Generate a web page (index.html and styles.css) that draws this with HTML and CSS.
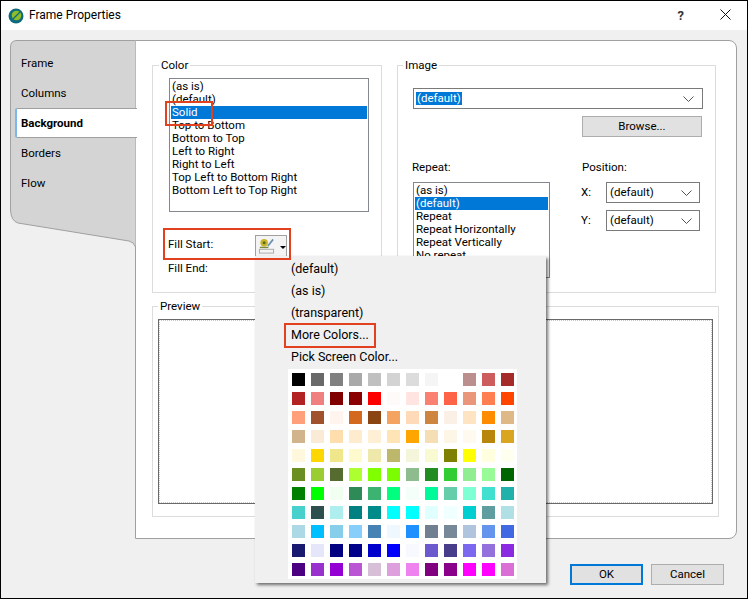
FILE: index.html
```html
<!DOCTYPE html>
<html lang="en">

<head>
    <meta charset="UTF-8">
    <title>Frame Properties</title>
    <link rel="stylesheet" href="styles.css">
</head>

<body>
    <div class="dialog">
        <div class="titlebar">
            <svg class="logo" width="16" height="16" viewBox="0 0 16 16">
                <circle cx="8" cy="8" r="7.5" fill="#0e6b7c" />
                <circle cx="8.5" cy="7.5" r="4.8" fill="#8fbc2b" />
                <path d="M5 11 L12 4" stroke="#0e6b7c" stroke-width="1.2" />
            </svg>
            <span class="title">Frame Properties</span>
            <span class="help">?</span>
            <svg class="close" width="11" height="11" viewBox="0 0 11 11">
                <path d="M0.5 0.5 L10.5 10.5 M10.5 0.5 L0.5 10.5" stroke="#111" stroke-width="1" fill="none" />
            </svg>
        </div>

        <div class="main">
            <div class="tabs">
                <svg class="tabs-bg" width="126" height="208" viewBox="0 0 126 208">
                    <path d="M0.5 207 L0.5 7 Q0.5 0.5 7 0.5 L125.5 0.5 L125.5 207 Q124 202 119 201 L8 183 Q1 181 0.5 170 Z" fill="#d4d4d4" stroke="none" />
                    <path d="M125.5 207 Q124 202 119 201 L8 183 Q1 181 0.5 170 L0.5 7 Q0.5 0.5 7 0.5 L125.5 0.5" fill="none" stroke="#a0a0a0" />
                </svg>
                <div class="tab">Frame</div>
                <div class="tab">Columns</div>
                <div class="tab tab-active">Background</div>
                <div class="tab">Borders</div>
                <div class="tab">Flow</div>
            </div>

            <div class="panel">
                <div class="top-row">
                    <fieldset class="group group-color">
                        <legend>Color</legend>
                        <div class="listbox color-list">
                            <div class="row">(as is)</div>
                            <div class="row">(default)</div>
                            <div class="row selected">Solid</div>
                            <div class="row">Top to Bottom</div>
                            <div class="row">Bottom to Top</div>
                            <div class="row">Left to Right</div>
                            <div class="row">Right to Left</div>
                            <div class="row">Top Left to Bottom Right</div>
                            <div class="row">Bottom Left to Top Right</div>
                        </div>
                        <div class="fill-row">
                            <span class="fill-label fill-start">Fill Start:</span>
                            <div class="fill-btn">
                                <svg width="18" height="20" viewBox="0 0 18 20">
                                    <rect x="1.5" y="13.5" width="15" height="4" fill="#f4f4f4" stroke="#a8a8a8" />
                                    <circle cx="6.5" cy="6.5" r="4" fill="#c9b52c" />
                                    <circle cx="6.5" cy="6.5" r="1.6" fill="#5d6b1c" />
                                    <path d="M2 11.5 L11 11.5" stroke="#7c8a3a" stroke-width="1.5" />
                                    <path d="M10.5 10 L16 3" stroke="#6e8fb0" stroke-width="1.8" />
                                </svg>
                                <span class="caret"></span>
                            </div>
                        </div>
                        <div class="fill-row fill-end">
                            <span class="fill-label">Fill End:</span>
                        </div>
                    </fieldset>

                    <fieldset class="group group-image">
                        <legend>Image</legend>
                        <div class="combo combo-wide">
                            <span class="combo-text"><span class="text-selected">(default)</span></span>
                            <svg class="chevron" width="11" height="6" viewBox="0 0 11 6"><path d="M0.5 0.5 L5.5 5.5 L10.5 0.5" fill="none" stroke="#555" /></svg>
                        </div>
                        <div class="browse-row">
                            <div class="button browse">Browse...</div>
                        </div>
                        <div class="image-cols">
                            <div class="repeat-col">
                                <div class="field-label repeat-label">Repeat:</div>
                                <div class="listbox repeat-list">
                                    <div class="row">(as is)</div>
                                    <div class="row selected">(default)</div>
                                    <div class="row">Repeat</div>
                                    <div class="row">Repeat Horizontally</div>
                                    <div class="row">Repeat Vertically</div>
                                    <div class="row">No repeat</div>
                                </div>
                            </div>
                            <div class="position-col">
                                <div class="field-label">Position:</div>
                                <div class="pos-grid">
                                    <span>X:</span>
                                    <div class="combo combo-small">
                                        <span class="combo-text">(default)</span>
                                        <svg class="chevron" width="11" height="6" viewBox="0 0 11 6"><path d="M0.5 0.5 L5.5 5.5 L10.5 0.5" fill="none" stroke="#555" /></svg>
                                    </div>
                                    <span>Y:</span>
                                    <div class="combo combo-small">
                                        <span class="combo-text">(default)</span>
                                        <svg class="chevron" width="11" height="6" viewBox="0 0 11 6"><path d="M0.5 0.5 L5.5 5.5 L10.5 0.5" fill="none" stroke="#555" /></svg>
                                    </div>
                                </div>
                            </div>
                        </div>
                    </fieldset>
                </div>

                <fieldset class="group group-preview">
                    <legend>Preview</legend>
                    <div class="preview-box"></div>
                </fieldset>
            </div>
        </div>

        <div class="footer">
            <div class="button dialog-btn default">OK</div>
            <div class="button dialog-btn">Cancel</div>
        </div>

        <div class="popup">
            <div class="menu-item">(default)</div>
            <div class="menu-item">(as is)</div>
            <div class="menu-item">(transparent)</div>
            <div class="menu-item">More Colors...</div>
            <div class="menu-item">Pick Screen Color...</div>
            <div class="swatches">
                <i style="background:black"></i><i style="background:dimgray"></i><i style="background:gray"></i><i style="background:darkgray"></i><i style="background:silver"></i><i style="background:lightgray"></i><i style="background:gainsboro"></i><i style="background:whitesmoke"></i><i style="background:white"></i><i style="background:rosybrown"></i><i style="background:indianred"></i><i style="background:brown"></i>
                <i style="background:firebrick"></i><i style="background:lightcoral"></i><i style="background:maroon"></i><i style="background:darkred"></i><i style="background:red"></i><i style="background:snow"></i><i style="background:mistyrose"></i><i style="background:salmon"></i><i style="background:tomato"></i><i style="background:darksalmon"></i><i style="background:coral"></i><i style="background:orangered"></i>
                <i style="background:lightsalmon"></i><i style="background:sienna"></i><i style="background:seashell"></i><i style="background:chocolate"></i><i style="background:saddlebrown"></i><i style="background:sandybrown"></i><i style="background:peachpuff"></i><i style="background:peru"></i><i style="background:linen"></i><i style="background:bisque"></i><i style="background:darkorange"></i><i style="background:burlywood"></i>
                <i style="background:tan"></i><i style="background:antiquewhite"></i><i style="background:navajowhite"></i><i style="background:blanchedalmond"></i><i style="background:papayawhip"></i><i style="background:moccasin"></i><i style="background:orange"></i><i style="background:wheat"></i><i style="background:oldlace"></i><i style="background:floralwhite"></i><i style="background:darkgoldenrod"></i><i style="background:goldenrod"></i>
                <i style="background:cornsilk"></i><i style="background:gold"></i><i style="background:khaki"></i><i style="background:lemonchiffon"></i><i style="background:palegoldenrod"></i><i style="background:darkkhaki"></i><i style="background:beige"></i><i style="background:lightgoldenrodyellow"></i><i style="background:olive"></i><i style="background:yellow"></i><i style="background:lightyellow"></i><i style="background:ivory"></i>
                <i style="background:olivedrab"></i><i style="background:yellowgreen"></i><i style="background:darkolivegreen"></i><i style="background:greenyellow"></i><i style="background:chartreuse"></i><i style="background:lawngreen"></i><i style="background:darkseagreen"></i><i style="background:forestgreen"></i><i style="background:limegreen"></i><i style="background:lightgreen"></i><i style="background:palegreen"></i><i style="background:darkgreen"></i>
                <i style="background:green"></i><i style="background:lime"></i><i style="background:honeydew"></i><i style="background:seagreen"></i><i style="background:mediumseagreen"></i><i style="background:springgreen"></i><i style="background:mintcream"></i><i style="background:mediumspringgreen"></i><i style="background:mediumaquamarine"></i><i style="background:aquamarine"></i><i style="background:turquoise"></i><i style="background:lightseagreen"></i>
                <i style="background:mediumturquoise"></i><i style="background:darkslategray"></i><i style="background:paleturquoise"></i><i style="background:teal"></i><i style="background:darkcyan"></i><i style="background:aqua"></i><i style="background:cyan"></i><i style="background:lightcyan"></i><i style="background:azure"></i><i style="background:darkturquoise"></i><i style="background:cadetblue"></i><i style="background:powderblue"></i>
                <i style="background:lightblue"></i><i style="background:deepskyblue"></i><i style="background:skyblue"></i><i style="background:lightskyblue"></i><i style="background:steelblue"></i><i style="background:aliceblue"></i><i style="background:dodgerblue"></i><i style="background:slategray"></i><i style="background:lightslategray"></i><i style="background:lightsteelblue"></i><i style="background:cornflowerblue"></i><i style="background:royalblue"></i>
                <i style="background:midnightblue"></i><i style="background:lavender"></i><i style="background:navy"></i><i style="background:darkblue"></i><i style="background:mediumblue"></i><i style="background:blue"></i><i style="background:ghostwhite"></i><i style="background:slateblue"></i><i style="background:darkslateblue"></i><i style="background:mediumslateblue"></i><i style="background:mediumpurple"></i><i style="background:blueviolet"></i>
                <i style="background:indigo"></i><i style="background:darkorchid"></i><i style="background:darkviolet"></i><i style="background:mediumorchid"></i><i style="background:thistle"></i><i style="background:plum"></i><i style="background:violet"></i><i style="background:purple"></i><i style="background:darkmagenta"></i><i style="background:magenta"></i><i style="background:fuchsia"></i><i style="background:orchid"></i>
            </div>
        </div>

        <div class="mark mark-solid"></div>
        <div class="mark mark-fill"></div>
        <div class="mark mark-more"></div>
    </div>
</body>

</html>
```

FILE: styles.css
```css
* {
    box-sizing: border-box;
}

html,
body {
    margin: 0;
    padding: 0;
}

body {
    font-family: Roboto, "Noto Sans", sans-serif;
    font-size: 11.5px;
    line-height: 13px;
    color: #000;
}

.dialog {
    position: relative;
    width: 748px;
    height: 599px;
    border: 1px solid #000;
    background-color: #f0f0f0;
    overflow: hidden;
}

/* title bar */
.titlebar {
    display: flex;
    align-items: center;
    height: 29px;
    padding-left: 7px;
    background-color: #fff;
}

.title {
    margin-left: 5px;
    font-size: 12px;
}

.help {
    margin-left: auto;
    font-size: 13px;
    font-weight: bold;
    color: #333;
}

.close {
    margin-left: 36px;
    margin-right: 16px;
    margin-bottom: 3px;
}

/* tabs + panel */
.main {
    display: flex;
    height: 499px;
    margin-top: 10px;
    padding-left: 9px;
}

.tabs {
    position: relative;
    width: 125px;
    padding-top: 8px;
}

.tabs-bg {
    position: absolute;
    left: 0;
    top: 0;
}

.tab {
    position: relative;
    height: 30px;
    padding-left: 11px;
    line-height: 30px;
}

.tab-active {
    width: 122px;
    margin-left: 5px;
    padding-left: 4px;
    background-color: #fff;
    border-top: 1px solid #a0a0a0;
    border-bottom: 1px solid #a0a0a0;
    border-left: 2px solid #7ab8ec;
    border-top-left-radius: 2px;
    border-bottom-left-radius: 2px;
    font-weight: bold;
    line-height: 28px;
}

.panel {
    width: 602px;
    padding: 18px 0 0 16px;
    background-color: #fff;
    border: 1px solid #a0a0a0;
    border-radius: 0 8px 8px 0;
}

.top-row {
    display: flex;
    gap: 15px;
}

.group {
    margin: 0;
    border: 1px solid #dcdcdc;
    min-width: 0;
}

.group legend {
    padding: 0 2px;
    line-height: 13px;
}

.group-color {
    width: 230px;
    height: 234px;
    padding: 6px 0 0 16px;
}

.group-color legend,
.group-image legend {
    margin-left: -10px;
}

.group-image {
    width: 319px;
    height: 234px;
    padding: 16px 0 0 15px;
}

.group-preview {
    width: 567px;
    height: 217px;
    margin-top: 7px;
    padding: 6px 0 0 5px;
}

/* lists */
.listbox {
    padding: 1px;
    background-color: #fff;
    border: 1px solid #828790;
    overflow: hidden;
}

.color-list {
    width: 200px;
    height: 134px;
}

.row {
    height: 13px;
    padding-left: 1px;
    white-space: nowrap;
}

.selected {
    background-color: #0078d7;
    color: #fff;
}

.fill-row {
    display: flex;
    align-items: center;
    margin-left: -1px;
}

.color-list + .fill-row {
    margin-top: 23px;
}

.fill-label {
    width: 87px;
}

.fill-start {
    margin-bottom: 4px;
}

.fill-btn {
    display: flex;
    align-items: center;
    width: 32px;
    height: 22px;
    padding-left: 2px;
    background-color: #f4f4f4;
    border: 1px solid #a0a0a0;
}

.caret {
    margin-left: 5px;
    margin-top: 3px;
    border-left: 3px solid transparent;
    border-right: 3px solid transparent;
    border-top: 3px solid #000;
}

.fill-end {
    margin-top: 5px;
}

/* image group */
.combo {
    display: flex;
    align-items: center;
    justify-content: space-between;
    height: 21px;
    background-color: #fff;
    border: 1px solid #7a7a7a;
}

.combo-wide {
    width: 290px;
    padding: 0 8px 0 2px;
}

.combo-small {
    width: 94px;
    padding: 0 7px 0 3px;
}

.text-selected {
    display: inline-block;
    padding: 0 1px;
    background-color: #0078d7;
    color: #fff;
}

.browse-row {
    display: flex;
    justify-content: flex-end;
    width: 289px;
    margin-top: 7px;
}

.button {
    height: 21px;
    background-color: #e1e1e1;
    border: 1px solid #adadad;
    text-align: center;
    line-height: 19px;
}

.browse {
    width: 120px;
}

.image-cols {
    display: flex;
    margin-top: 24px;
}

.repeat-col {
    width: 169px;
}

.repeat-label {
    margin-left: -1px;
}

.listbox.repeat-list {
    width: 137px;
    height: 96px;
    margin-top: 8px;
}

.field-label {
    line-height: 13px;
}

.pos-grid {
    display: grid;
    grid-template-columns: 25px 94px;
    row-gap: 7px;
    align-items: center;
    margin-top: 8px;
    margin-left: -1px;
}

.preview-box {
    width: 555px;
    height: 185px;
    border: 1px solid #696969;
    outline: 1px dotted #c8c8c8;
    outline-offset: -2px;
}

/* footer */
.footer {
    display: flex;
    justify-content: flex-end;
    gap: 8px;
    margin-top: 25px;
    padding-right: 23px;
}

.dialog-btn {
    width: 73px;
}

.default {
    border: 2px solid #0078d7;
    line-height: 17px;
}

/* colour popup */
.popup {
    position: absolute;
    left: 254px;
    top: 255px;
    width: 291px;
    height: 327px;
    padding: 2px 0 0 33px;
    background-color: #f0f0f0;
    box-shadow: 2px 2px 3px rgba(0, 0, 0, 0.55);
}

.menu-item {
    height: 22px;
    padding-left: 3px;
    font-size: 12.5px;
    line-height: 22px;
}

.swatches {
    display: grid;
    grid-template-columns: repeat(12, 13px);
    grid-auto-rows: 13px;
    gap: 6px;
    width: 229px;
    height: 210px;
    margin-top: 1px;
    padding: 4px 0 0 4px;
    background-color: #fff;
}

/* red annotation boxes */
.mark {
    position: absolute;
    border: 2px solid #e2411f;
}

.mark-solid {
    left: 164px;
    top: 100px;
    width: 48px;
    height: 25px;
}

.mark-fill {
    left: 162px;
    top: 227px;
    width: 128px;
    height: 32px;
}

.mark-more {
    left: 283px;
    top: 322px;
    width: 92px;
    height: 25px;
}
```
